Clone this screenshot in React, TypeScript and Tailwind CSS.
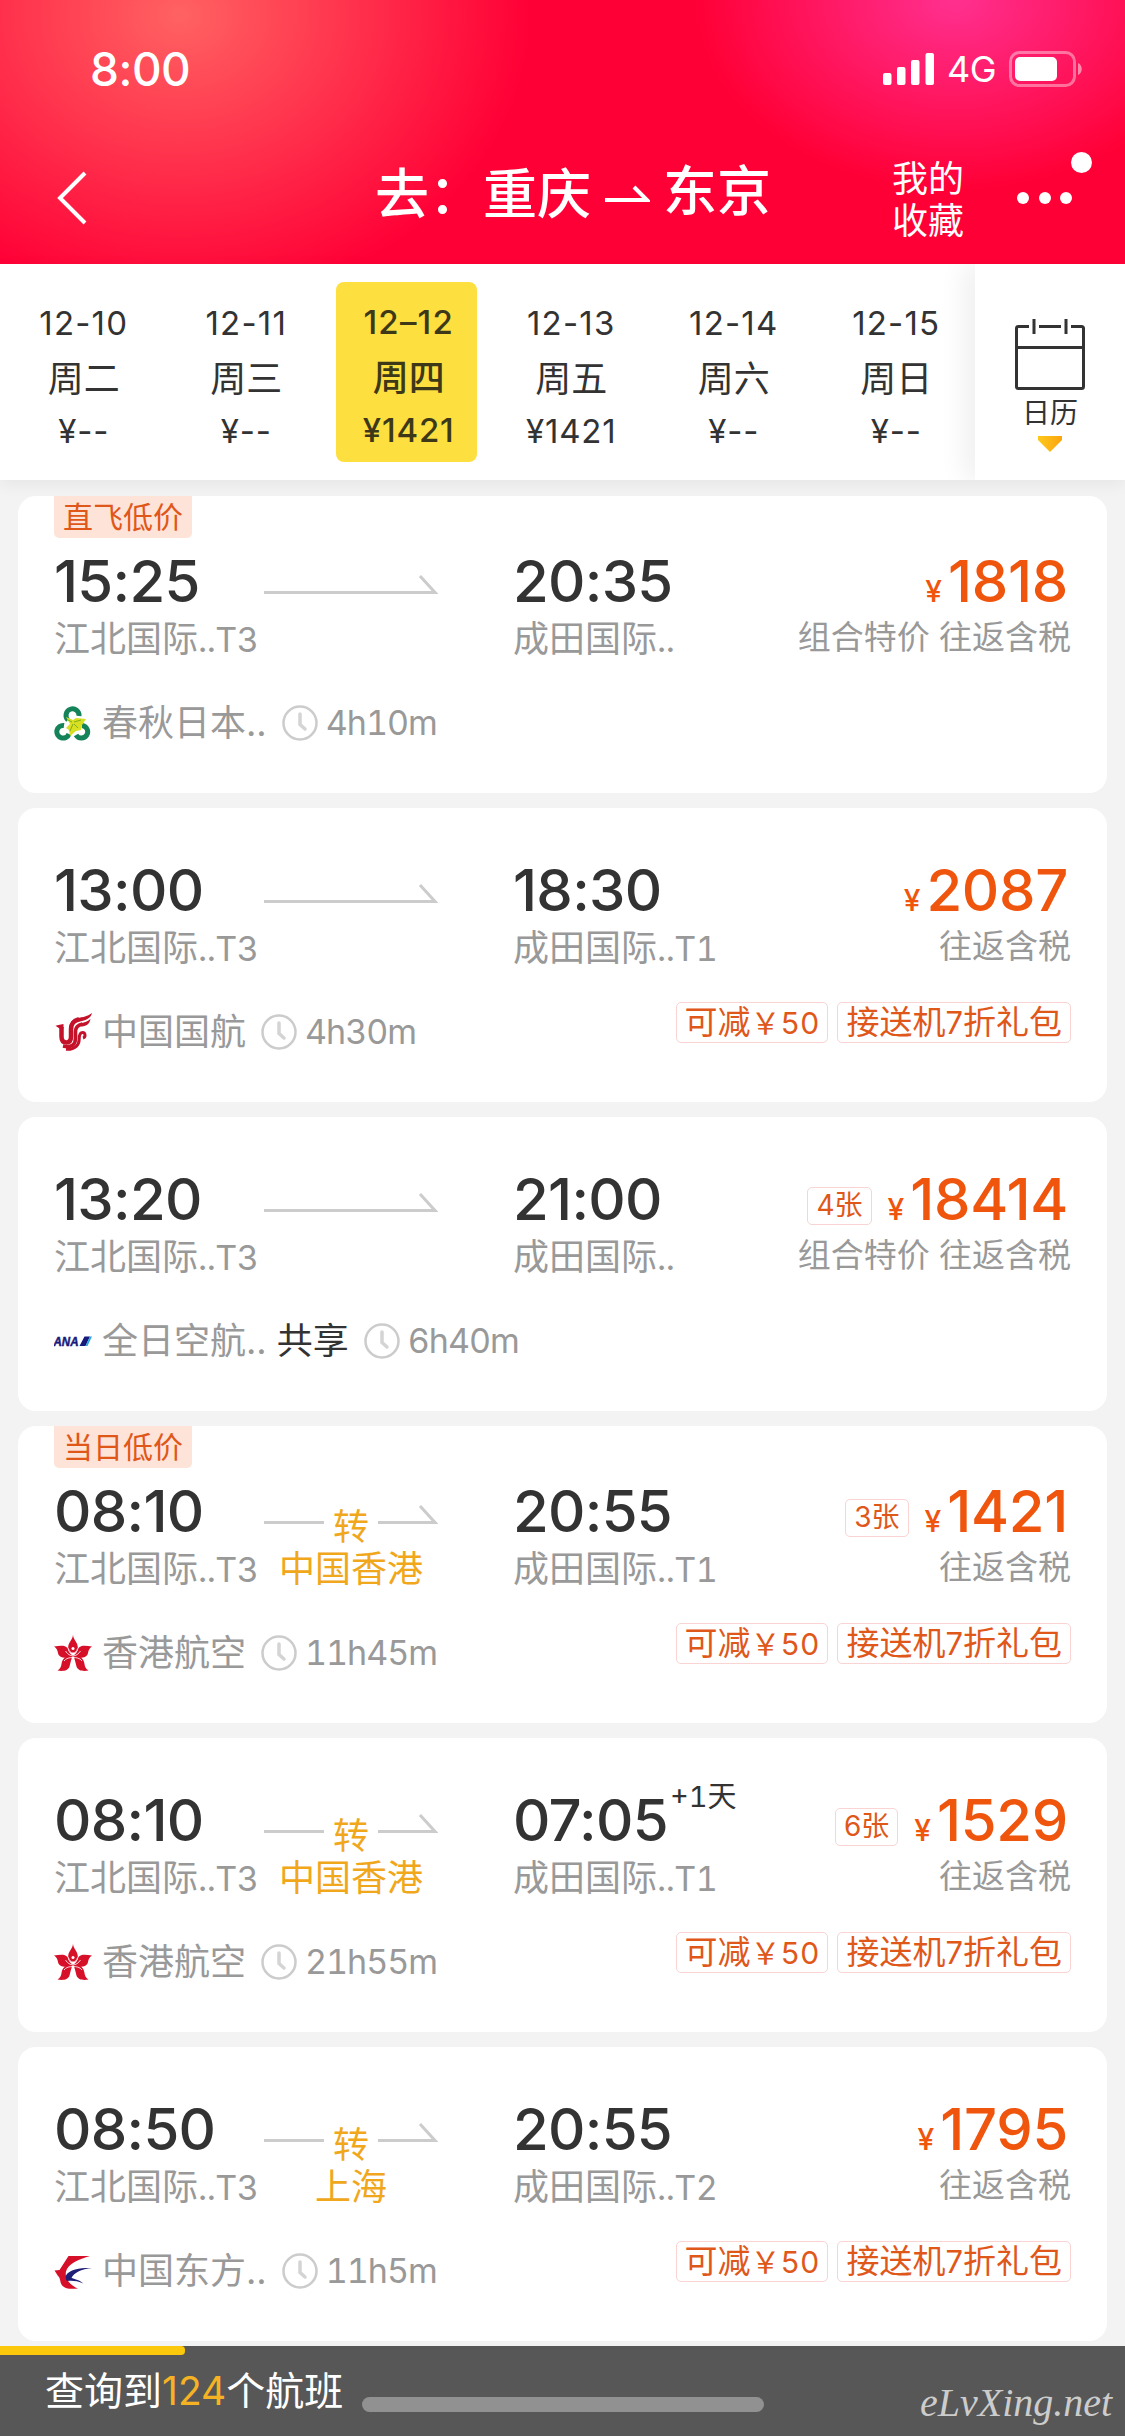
import type { ReactNode } from "react";

type Flight = {
  badge?: string;
  depart: string;
  arrive: string;
  from: string;
  fromTerminal: string;
  to: string;
  toTerminal: string;
  via?: string;
  nextDay?: string;
  price: string;
  seats?: string;
  note: string;
  logo: ReactNode;
  airline: string;
  shared?: boolean;
  duration: string;
  coupons?: boolean;
};

const dates = [
  { date: "12-10", day: "周二", price: "¥--" },
  { date: "12-11", day: "周三", price: "¥--" },
  { date: "12–12", day: "周四", price: "¥1421", active: true },
  { date: "12-13", day: "周五", price: "¥1421" },
  { date: "12-14", day: "周六", price: "¥--" },
  { date: "12-15", day: "周日", price: "¥--" },
];

function SpringLogo() {
  return (
    <svg viewBox="0 0 38 38" className="h-[38px] w-[38px]">
      <g fill="none" stroke="#15835a" strokeWidth="5">
        <path d="M14 16A6.500 6.500 0 1 1 25 12" />
        <path d="M10 21.500A6.300 6.300 0 1 0 15 30" />
        <path d="M28 21.500A6.300 6.300 0 1 1 22 31" />
      </g>
      <path
        d="M12 13l7 3 3-2 10 1-4 6-1 5-5 1-6 5-1-6-3-2 4-4z"
        fill="#d9e021"
      />
      <path d="M20 18l7-2M20 20l4 4M19 20l-3 7M18 18l-4-2" stroke="#7fae1a" strokeWidth="1" />
    </svg>
  );
}

function AirChinaLogo() {
  return (
    <svg viewBox="0 0 38 38" className="h-[38px] w-[38px]">
      <g fill="none" stroke="#c4122b">
        <path d="M7.500 14v9.500c0 4 2 6 4.800 6s4.700-2 4.700-6V16c0-5.500 3.500-8.500 8-9.800" strokeWidth="4.500" />
        <path d="M9 33c9 2 12.500-1.500 12.500-8v-6.500c0-4.500 2.500-6.500 7-7.500" strokeWidth="3.600" />
        <path d="M12 36.300c9 .7 13.200-4.300 13.200-10.300 0-4 1-6.500 3.500-6.500s3.500 4.500.3 5.500" strokeWidth="3" />
      </g>
      <path
        d="M1.500 12.800l3-.800 5-1v4.500H5.500zM16 11C19 4 27 5 31 3.500 34 2.500 36 1.500 38 0c-1 4-4 7-12 8.500zM24 13c3-4 8-3 12.500-7-1 5-4 7-8.500 7.500z"
        fill="#c4122b"
      />
    </svg>
  );
}

function AnaLogo() {
  return (
    <svg viewBox="0 0 38 38" className="h-[38px] w-[38px]">
      <text
        x="-0.500"
        y="23.800"
        fontFamily="Liberation Sans, Arial, sans-serif"
        fontSize="12.500"
        fontWeight="bold"
        fontStyle="italic"
        textLength="25"
        lengthAdjust="spacingAndGlyphs"
        fill="#171a7c"
        stroke="#171a7c"
        strokeWidth="0.500"
      >
        ANA
      </text>
      <path d="M30.500 14.500h5.500L31.500 24h-6z" fill="#171a7c" />
      <path d="M36 14.500h2L33.500 24h-2z" fill="#2aa7df" />
    </svg>
  );
}

function HongKongLogo() {
  return (
    <svg viewBox="0 0 38 38" className="h-[38px] w-[38px]">
      <g fill="#d7102a">
        <path d="M19 .500c0 5 5 8 4.800 13-.3 3.500-2 5.500-4.800 5.500s-4.500-2-4.800-5.500C14 8.500 19 5.500 19 .500z" />
        <path d="M0 12.500c5-.5 10.500-2 13.500 1.500 1 4 3 6.500 6 8-5 2.500-14.500 3-15.500-3-.5-3-1.500-5-4-6.500z" />
        <path d="M38 12.500c-5-.5-10.500-2-13.500 1.500-1 4-3 6.500-6 8 5 2.500 14.500 3 15.500-3 .5-3 1.500-5 4-6.500z" />
        <path d="M18.800 21C12 21 8 25 7.500 30c-.3 3-1.500 5-4 6.500 5 1 10.500.500 12-4 1-4 2-8 3.300-11.500z" />
        <path d="M19.200 21C26 21 30 25 30.500 30c.3 3 1.500 5 4 6.500-5 1-10.500.500-12-4-1-4-2-8-3.300-11.500z" />
      </g>
      <path
        d="M14.500 14.500c1 6 8 6 9 0M11.500 17c4 6.500 11 6.500 15 0M10 27c2-3 6-3.500 9-3.500s7 .500 9 3.500"
        fill="none"
        stroke="#fff"
        strokeWidth="0.800"
      />
      <circle cx="19" cy="14.500" r="1.500" fill="#fff" />
    </svg>
  );
}

function EasternLogo() {
  return (
    <svg viewBox="0 0 38 38" className="h-[38px] w-[38px]">
      <path
        d="M14.500 4H36C25 7 14 12 12 19.500c-1.500 7 4 14 12 17-9 1-14 0-16.500-4C6 30 6.500 26 4 24L.5 18.500l5-.5z"
        fill="#d7102a"
      />
      <path
        d="M38.500 16C30 15.500 15 16.500 12 23.500c-.5 2 0 5 1.500 5.500 5-.5 10 0 16 2.500-5-4-9-4.500-12-5.500 2-5 10-9 21-10z"
        fill="#1f1f78"
      />
    </svg>
  );
}

const flights: Flight[] = [
  {
    badge: "直飞低价",
    depart: "15:25",
    arrive: "20:35",
    from: "江北国际",
    fromTerminal: "..T3",
    to: "成田国际",
    toTerminal: "..",
    price: "1818",
    note: "组合特价 往返含税",
    logo: <SpringLogo />,
    airline: "春秋日本..",
    duration: "4h10m",
  },
  {
    depart: "13:00",
    arrive: "18:30",
    from: "江北国际",
    fromTerminal: "..T3",
    to: "成田国际",
    toTerminal: "..T1",
    price: "2087",
    note: "往返含税",
    logo: <AirChinaLogo />,
    airline: "中国国航",
    duration: "4h30m",
    coupons: true,
  },
  {
    depart: "13:20",
    arrive: "21:00",
    from: "江北国际",
    fromTerminal: "..T3",
    to: "成田国际",
    toTerminal: "..",
    price: "18414",
    seats: "4张",
    note: "组合特价 往返含税",
    logo: <AnaLogo />,
    airline: "全日空航..",
    shared: true,
    duration: "6h40m",
  },
  {
    badge: "当日低价",
    depart: "08:10",
    arrive: "20:55",
    from: "江北国际",
    fromTerminal: "..T3",
    to: "成田国际",
    toTerminal: "..T1",
    via: "中国香港",
    price: "1421",
    seats: "3张",
    note: "往返含税",
    logo: <HongKongLogo />,
    airline: "香港航空",
    duration: "11h45m",
    coupons: true,
  },
  {
    depart: "08:10",
    arrive: "07:05",
    from: "江北国际",
    fromTerminal: "..T3",
    to: "成田国际",
    toTerminal: "..T1",
    via: "中国香港",
    nextDay: "+1天",
    price: "1529",
    seats: "6张",
    note: "往返含税",
    logo: <HongKongLogo />,
    airline: "香港航空",
    duration: "21h55m",
    coupons: true,
  },
  {
    depart: "08:50",
    arrive: "20:55",
    from: "江北国际",
    fromTerminal: "..T3",
    to: "成田国际",
    toTerminal: "..T2",
    via: "上海",
    price: "1795",
    note: "往返含税",
    logo: <EasternLogo />,
    airline: "中国东方..",
    duration: "11h5m",
    coupons: true,
  },
];

function StatusBar() {
  return (
    <div className="flex h-[138px] items-center justify-between pl-[90px] pr-[42px] text-white">
      <span className="text-[46px] leading-[56px] font-medium tracking-[-0.500px]">8:00</span>
      <div className="flex items-center">
        <svg viewBox="0 0 52 32" className="h-8 w-[52px]" fill="#fff">
          <rect x="0" y="20" width="8.500" height="12" rx="2" />
          <rect x="14" y="14" width="8.500" height="18" rx="2" />
          <rect x="28" y="7" width="8.500" height="25" rx="2" />
          <rect x="42.500" y="0" width="8.500" height="32" rx="2" />
        </svg>
        <span className="ml-3 w-[50px] text-[36px] leading-[40px] tracking-[-0.500px]">4G</span>
        <svg viewBox="0 0 74 36" className="ml-3 h-9 w-[74px]">
          <rect x="1.500" y="1.500" width="64" height="33" rx="9" fill="none" stroke="#fff" strokeOpacity="0.400" strokeWidth="3" />
          <rect x="6" y="6" width="42" height="24" rx="5" fill="#fff" />
          <path d="M69 12c5 2 5 10 0 12z" fill="#fff" fillOpacity="0.500" />
        </svg>
      </div>
    </div>
  );
}

function NavBar() {
  return (
    <div className="flex h-[126px] items-start text-white">
      <svg viewBox="0 0 30 54" className="mt-[33px] ml-[57px] h-[54px] w-[30px]">
        <path d="M28 2L3 27l25 25" fill="none" stroke="#fff" strokeWidth="4" />
      </svg>
      <div className="ml-[288px] flex text-[54px] leading-[60px] font-medium">
        <span className="mt-[27px]">去：重庆</span>
        <svg viewBox="0 0 46 20" className="mt-[46px] mr-[13px] ml-[13px] h-5 w-[46px]">
          <path d="M1 16h42L30 3" fill="none" stroke="#fff" strokeWidth="4" />
        </svg>
        <span className="mt-6">东京</span>
      </div>
      <div className="mt-5 ml-[121px] text-[36px] leading-[42px]">
        我的
        <br />
        收藏
      </div>
      <div className="relative mt-[54px] ml-[53px] flex gap-[9.500px]">
        <i className="size-3 rounded-full bg-white" />
        <i className="size-3 rounded-full bg-white" />
        <i className="size-3 rounded-full bg-white" />
        <i className="absolute -top-10 left-[54px] size-[21px] rounded-full bg-white" />
      </div>
    </div>
  );
}

function DateStrip() {
  return (
    <div className="relative z-10 flex h-[216px] bg-white text-[#333] shadow-[0_4px_16px_rgba(0,0,0,0.06)]">
      <div className="flex w-[975px] pt-[18px] pl-0.5">
        {dates.map((d) => (
          <div key={d.date} className="flex w-[162.500px] shrink-0 justify-center pr-[3px]">
            <div
              className={
                d.active
                  ? "flex h-[180px] w-[141px] flex-col items-center rounded-lg bg-[#fddf40] pt-5 pl-1 font-medium text-[#3d3918]"
                  : "flex h-[180px] w-[141px] flex-col items-center pt-[21px] pl-1"
              }
            >
              <span className="text-[33px] leading-10 tracking-[1.200px]">{d.date}</span>
              <span className="mt-3.5 text-[36px] leading-[44px]">{d.day}</span>
              <span className="mt-2.5 text-[33px] leading-10 tracking-[0.800px]">{d.price}</span>
            </div>
          </div>
        ))}
      </div>
      <div className="flex flex-1 flex-col items-center bg-white pt-[54px] shadow-[-12px_0_24px_rgba(0,0,0,0.06)] [clip-path:inset(0_0_0_-50px)]">
        <svg viewBox="0 0 72 72" className="h-[72px] w-[72px]" fill="none" stroke="#333" strokeWidth="3">
          <path d="M15 8.500H4.500a2 2 0 0 0-2 2v58a2 2 0 0 0 2 2h63a2 2 0 0 0 2-2v-58a2 2 0 0 0-2-2H57M25 8.500h22M2.500 29.500h67M20 1v15M52 1v15" />
        </svg>
        <span className="mt-[5px] text-[28px] leading-[36px]">日历</span>
        <svg viewBox="0 0 24 16" className="mt-[5px] h-4 w-6">
          <defs>
            <linearGradient id="drop" x1="0" x2="1">
              <stop offset="0" stopColor="#fdc81c" />
              <stop offset="1" stopColor="#fba50f" />
            </linearGradient>
          </defs>
          <path d="M0 0h24v4L12 16 0 4z" fill="url(#drop)" />
        </svg>
      </div>
    </div>
  );
}

function RouteArrow({ via }: { via?: string }) {
  return (
    <div className="w-[174px]">
      <svg viewBox="0 0 174 65" className="block h-[65px] w-[174px]" fill="none" stroke="#ccc" strokeWidth="3">
        <path d={via ? "M0 40.500h60M114 40.500h57L156 24" : "M0 40.500h171L156 24"} />
      </svg>
      {via && (
        <div className="-mt-[38px] flex flex-col items-center text-[36px] text-[#f0a71c]">
          <span className="leading-9">转</span>
          <span className="mt-[3px] leading-[42px] whitespace-nowrap">{via}</span>
        </div>
      )}
    </div>
  );
}

function Airport({ name, terminal }: { name: string; terminal: string }) {
  return (
    <div className="mt-2 text-[36px] leading-[42px] text-[#999]">
      {name}
      <span className="text-[34px] tracking-[-0.500px] tabular-nums">{terminal}</span>
    </div>
  );
}

function Clock() {
  return (
    <svg viewBox="0 0 36 36" className="h-9 w-9" fill="none" stroke="#ccc" strokeWidth="2.500">
      <circle cx="18" cy="18" r="16.500" />
      <path d="M18 9v10.500l5 4.500" stroke="#d4d4d4" strokeWidth="3.500" strokeLinecap="round" />
    </svg>
  );
}

function Coupon({ children }: { children: ReactNode }) {
  return (
    <span className="h-[41px] rounded-[5px] border border-[#fad3d3] px-2 text-[33px] leading-[39px] whitespace-nowrap text-[#e0571a]">
      {children}
    </span>
  );
}

function FlightCard({ flight }: { flight: Flight }) {
  return (
    <article
      className={
        flight.badge
          ? "relative h-[297px] rounded-[18px] bg-white px-9 pt-14"
          : "relative h-[294px] rounded-[18px] bg-white px-9 pt-[53px]"
      }
    >
      {flight.badge && (
        <span className="absolute top-0 left-9 h-[42px] w-[138px] rounded-b-[5px] bg-[#fee4d8] text-center text-[30px] leading-[42px] text-[#e0571a]">
          {flight.badge}
        </span>
      )}
      <div className="flex h-[141px] items-start text-[#333]">
        <div className="w-[210px] whitespace-nowrap">
          <div className="text-[58px] leading-[58px] font-medium tracking-[-0.700px]">{flight.depart}</div>
          <Airport name={flight.from} terminal={flight.fromTerminal} />
        </div>
        <RouteArrow via={flight.via} />
        <div className="ml-[75px] whitespace-nowrap">
          <div className="flex text-[58px] leading-[58px] font-medium tracking-[-0.700px]">
            {flight.arrive}
            {flight.nextDay && (
              <span className="-mt-3 ml-0.5 text-[29px] leading-[36px] font-normal tracking-normal tabular-nums">
                {flight.nextDay}
              </span>
            )}
          </div>
          <Airport name={flight.to} terminal={flight.toTerminal} />
        </div>
        <div className="ml-auto flex flex-col items-end">
          <div className="flex items-baseline pr-[3px] text-[#f0550e]">
            {flight.seats && (
              <span className="mt-[17px] mr-4 h-[38px] self-start rounded-[5px] border border-[#fad3d3] px-2 text-[28px] leading-[35px] text-[#e0571a]">
                {flight.seats}
              </span>
            )}
            <span className="mr-1.5 text-[30px] leading-[30px] font-medium">¥</span>
            <span className="text-[58px] leading-[58px] font-medium tracking-[-0.300px]">{flight.price}</span>
          </div>
          <div className="mt-1.5 text-[33px] leading-[42px] text-[#999]">{flight.note}</div>
        </div>
      </div>
      <div className="flex items-start justify-between">
        <div className="flex items-center pt-[9px] text-[36px] leading-[42px] text-[#999]">
          {flight.logo}
          <span className="ml-[10px]">{flight.airline}</span>
          {flight.shared && <span className="ml-2.5 text-[#333]">共享</span>}
          <span className="mr-2 ml-[15px]">
            <Clock />
          </span>
          <span className="text-[34px] tracking-[-1px] tabular-nums">{flight.duration}</span>
        </div>
        {flight.coupons && (
          <div className="flex gap-[9px]">
            <Coupon>
              可减<span className="text-[30px] tabular-nums">￥50</span>
            </Coupon>
            <Coupon>
              接送机<span className="text-[31px]">7</span>折礼包
            </Coupon>
          </div>
        )}
      </div>
    </article>
  );
}

function Footer() {
  return (
    <footer className="absolute inset-x-0 bottom-0 h-[90px] bg-[#575757]">
      <div className="h-[9px] w-[185px] rounded-r-[4px] bg-[#fcc80b]" />
      <div className="flex items-start pl-[45px] text-white">
        <span className="mt-3 w-[317px] text-[39px] leading-[48px] whitespace-nowrap">
          查询到<b className="font-normal text-[#f5b324]">124</b>个航班
        </span>
        <i className="mt-[42px] h-[15px] w-[402px] rounded-full bg-[#919191]" />
        <span className="mt-6 ml-[156px] font-['Liberation_Serif',serif] text-[40px] leading-[48px] text-[#ccc] italic">
          eLvXing.net
        </span>
      </div>
    </footer>
  );
}

export default function App() {
  return (
    <div className="relative h-[2436px] w-[1125px] overflow-hidden bg-[#f3f3f3] font-[Inter,'Noto_Sans_CJK_SC',sans-serif]">
      <header className="h-[264px] bg-[#ff0036] bg-[radial-gradient(ellipse_350px_290px_at_180px_15px,#ff6262,transparent),radial-gradient(ellipse_260px_190px_at_955px_0px,#ff3090,transparent)]">
        <StatusBar />
        <NavBar />
      </header>
      <DateStrip />
      <main className="flex flex-col gap-[15px] px-[18px] pt-4">
        {flights.map((f, i) => (
          <FlightCard key={i} flight={f} />
        ))}
      </main>
      <Footer />
    </div>
  );
}
